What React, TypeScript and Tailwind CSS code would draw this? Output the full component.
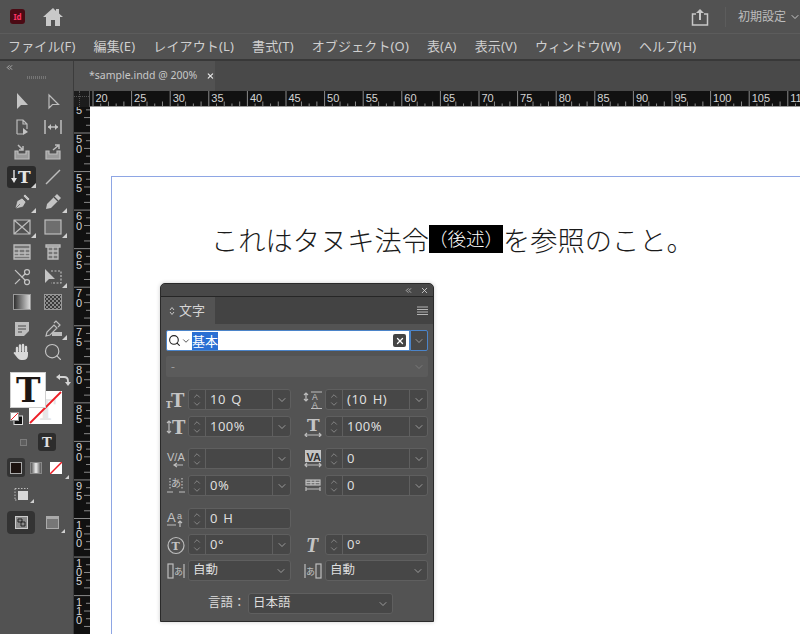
import React from 'react';
import { ChevronDown, ChevronUp, ChevronsLeft, X, Search, Scissors } from 'lucide-react';

const ui = "font-['Noto_Sans','Noto_Sans_CJK_JP',sans-serif]";
const menus = ['ファイル(F)', '編集(E)', 'レイアウト(L)', '書式(T)', 'オブジェクト(O)', '表(A)', '表示(V)', 'ウィンドウ(W)', 'ヘルプ(H)'];

const Corner = () => (
  <span className="absolute bottom-0 right-[1px] w-0 h-0 border-l-[5px] border-l-transparent border-b-[5px] border-b-[#d0d0d0]" />
);

const Ico = ({ children, size = 20 }: { children: React.ReactNode; size?: number }) => (
  <svg width={size} height={size} viewBox="0 0 20 20" fill="none" stroke="#bdbdbd" strokeWidth="1.2">
    {children}
  </svg>
);

const SerifT = ({ x, y, size, fill = '#c4c4c4' }: { x: number; y: number; size: number; fill?: string }) => (
  <text x={x} y={y} fontSize={size} fontWeight="700" fontFamily="'DejaVu Serif', serif" fill={fill} stroke="none">T</text>
);

const tools: { icon: React.ReactNode; corner?: boolean; active?: boolean }[][] = [
  [
    { icon: <Ico><path d="M5 2v16l4-4h7z" transform="translate(0 -1)" fill="#c4c4c4" stroke="none" /></Ico> },
    { icon: <Ico><path d="M6 3v13l3.500-3.500h6z" /></Ico> },
  ],
  [
    { icon: <Ico><path d="M5 17V3h6l4 4v5M11 3v4h4M5 17h6" /><path d="M11 11v7l5-3z" fill="#c4c4c4" stroke="none" /></Ico> },
    { icon: <Ico><path d="M2 3v14M18 3v14M5 10h10" strokeWidth="1.5" /><path d="M8 7l-3 3 3 3zM12 7l3 3-3 3z" fill="#c4c4c4" stroke="none" /></Ico> },
  ],
  [
    { icon: <Ico><path d="M3 9v8h14V9h-3v3H6V9z" fill="#9a9a9a" /><path d="M6 3l5 5M11 4v4H7" strokeWidth="1.5" /></Ico> },
    { icon: <Ico><path d="M3 9v8h14V9h-3v3H6V9z" fill="#9a9a9a" /><path d="M10 8l6-5M12 3h4v4" strokeWidth="1.5" /></Ico> },
  ],
  [
    {
      active: true,
      corner: true,
      icon: (
        <svg width="24" height="20" viewBox="0 0 24 20" fill="none" stroke="#e4e4e4" strokeWidth="1.400">
          <path d="M4 3v10" />
          <path d="M1 11l3 5 3-5z" fill="#e4e4e4" stroke="none" />
          <SerifT x={8} y={16} size={17} fill="#e4e4e4" />
        </svg>
      ),
    },
    { icon: <Ico><path d="M3 17L17 3" strokeWidth="1.400" /></Ico> },
  ],
  [
    { corner: true, icon: <Ico><path d="M3 17l2-8 5-3 4 4-3 5zM3 17l5-5M11 4l2-2 5 5-2 2z" fill="#c4c4c4" stroke="#3f3f3f" strokeWidth=".6" /></Ico> },
    { corner: true, icon: <Ico><path d="M3 17l1-5L14 2l4 4L8 16z" fill="#c4c4c4" stroke="none" /><path d="M11 5l4 4" stroke="#4a4a4a" /></Ico> },
  ],
  [
    { corner: true, icon: <Ico><path d="M2 3h16v14H2zM2 3l16 14M18 3L2 17" /></Ico> },
    { corner: true, icon: <Ico><rect x="2" y="3" width="16" height="14" fill="#6e6e6e" stroke="#bdbdbd" /></Ico> },
  ],
  [
    { icon: <Ico><path d="M2 3h16v14H2zM2 7h16M2 11h16M2 14h16M7 7v7M13 7v7" fill="#777" strokeWidth="1.300" /></Ico> },
    { icon: <Ico><path d="M3 3h14v2H3zM5 5v12h10V5zM10 5v12M5 9h10M5 13h10" fill="#777" strokeWidth="1.300" /></Ico> },
  ],
  [
    { icon: <Scissors size={20} color="#c4c4c4" strokeWidth={1.500} className="-scale-x-100" /> },
    { corner: true, icon: <Ico><path d="M8 4h10v12H8" strokeDasharray="2 1.500" /><path d="M2 2v14l4-4h6z" fill="#c4c4c4" stroke="none" /></Ico> },
  ],
  [
    {
      icon: (
        <svg width="18" height="16" viewBox="0 0 18 16">
          <defs>
            <linearGradient id="tg"><stop offset="0" stopColor="#2b2b2b" /><stop offset="1" stopColor="#e0e0e0" /></linearGradient>
          </defs>
          <rect x=".5" y=".5" width="17" height="15" fill="url(#tg)" stroke="#9a9a9a" />
        </svg>
      ),
    },
    {
      icon: (
        <svg width="18" height="16" viewBox="0 0 18 16">
          <defs>
            <pattern id="ck" width="4" height="4" patternUnits="userSpaceOnUse">
              <rect width="4" height="4" fill="#8a8a8a" /><rect width="2" height="2" fill="#3a3a3a" /><rect x="2" y="2" width="2" height="2" fill="#3a3a3a" />
            </pattern>
          </defs>
          <rect x=".5" y=".5" width="17" height="15" fill="url(#ck)" stroke="#9a9a9a" />
        </svg>
      ),
    },
  ],
];

const tools2: { icon: React.ReactNode; corner?: boolean }[][] = [
  [
    { icon: <Ico><path d="M3 3h14v9l-5 5H3z" fill="#bdbdbd" stroke="none" /><path d="M6 7h8M6 10h8M6 13h4" stroke="#4a4a4a" /></Ico> },
    { corner: true, icon: <Ico><path d="M3 17l1-4 7-7 3 3-7 7zM11 4l2-2 4 4-2 2" /><rect x="9" y="13" width="10" height="4" fill="#bdbdbd" stroke="none" /></Ico> },
  ],
  [
    {
      icon: (
        <Ico>
          <path d="M5 11V6M8 9V3.500M11 9V3M14 10V5" stroke="#d8d8d8" strokeWidth="2.400" strokeLinecap="round" />
          <path d="M4 10h12v3q0 5-5 5H9q-2 0-3.500-2L1.500 11q1-1.500 2.500-.500z" fill="#d8d8d8" stroke="none" />
        </Ico>
      ),
    },
    { icon: <Search size={20} color="#c4c4c4" strokeWidth={1.400} /> },
  ],
];

const ToolRow = ({ row, h = 'h-[25px]' }: { row: { icon: React.ReactNode; corner?: boolean; active?: boolean }[]; h?: string }) => (
  <div className={`flex ${h} items-center`}>
    {row.map((t, i) => (
      <div key={i} className="relative flex h-[22px] w-[31px] items-center justify-center">
        {t.active && <span className="absolute inset-y-0 left-[1px] right-[1px] rounded-[3px] bg-[#2b2b2b]" />}
        <span className="relative flex">{t.icon}</span>
        {t.corner && <Corner />}
      </div>
    ))}
  </div>
);

const Toolbar = () => (
  <aside className="flex w-[74px] shrink-0 flex-col border-r border-[#3c3c3c] bg-[#525252]">
    <div className="flex h-[12px] items-center pl-[5px]">
      <ChevronsLeft size={9} color="#cfcfcf" strokeWidth={2} />
    </div>
    <div className="mx-auto mt-[3px] h-[3px] w-[20px] bg-[repeating-linear-gradient(90deg,#767676_0,#767676_1px,transparent_1px,transparent_2px)]" />
    <div className="mt-[10px] flex flex-col pl-[6px]">
      {tools.map((r, i) => <ToolRow key={i} row={r} />)}
      <div className="mt-[3px]">
        {tools2.map((r, i) => <ToolRow key={i} row={r} h={i === 0 ? 'h-[24px]' : 'h-[22px]'} />)}
      </div>
    </div>
    <div className="relative ml-[10px] mt-[9px] h-[53px] w-[56px]">
      <div className="absolute left-[19px] top-[19px] h-[33px] w-[33px] overflow-hidden bg-white">
        <svg width="33" height="33" viewBox="0 0 33 33">
          <SerifT x={6} y={29} size={28} fill="#e6e6e6" />
          <path d="M1 32L32 1" stroke="#ee1c25" strokeWidth="1.800" />
        </svg>
      </div>
      <div className="absolute left-0 top-0 flex h-[36px] w-[36px] items-center justify-center border border-[#cfcfcf] bg-white">
        <svg width="34" height="34" viewBox="0 0 34 34"><SerifT x={5} y={29} size={33} fill="#1d1614" /></svg>
      </div>
      <svg className="absolute left-[45px] top-[0px]" width="16" height="16" viewBox="0 0 16 16" fill="none" stroke="#d4d4d4" strokeWidth="1.800">
        <path d="M3 5h6q4 0 4 4v3" />
        <path d="M1 5l4-3v6zM10 10h6l-3 4z" fill="#d4d4d4" stroke="none" />
      </svg>
      <svg className="absolute left-[0px] top-[40px]" width="13" height="13" viewBox="0 0 13 13">
        <rect x="4" y="4" width="8.500" height="8.500" fill="#111" stroke="#ddd" />
        <rect x=".5" y=".5" width="8" height="8" fill="#fff" stroke="#999" />
        <path d="M1 8l7-7" stroke="#ee1c25" />
      </svg>
    </div>
    <div className="ml-[14px] mt-[8px] flex h-[18px] items-center gap-[11px]">
      <span className="ml-[6px] h-[7px] w-[7px] border border-[#7c7c7c] bg-[#5e5e5e]" />
      <span className="flex h-[18px] w-[18px] items-center justify-center rounded-[3px] bg-[#2d2d2d]">
        <svg width="14" height="14" viewBox="0 0 14 14"><SerifT x={2} y={12} size={13} fill="#e0e0e0" /></svg>
      </span>
    </div>
    <div className="ml-[7px] mt-[7px] flex h-[19px] items-center">
      <span className="flex h-[19px] w-[18px] items-center justify-center rounded-[3px] bg-[#333]">
        <span className="h-[12px] w-[12px] border border-[#aaa] bg-[#1c1310]" />
      </span>
      <span className="ml-[5px] h-[12px] w-[12px] border border-[#888] bg-[linear-gradient(90deg,#555,#eee_50%,#555)]" />
      <span className="relative ml-[8px] h-[12px] w-[12px] bg-white">
        <svg width="12" height="12" viewBox="0 0 12 12" className="absolute inset-0"><path d="M0 12L12 0" stroke="#ee1c25" strokeWidth="1.500" /></svg>
        <span className="absolute -bottom-[5px] -right-[7px] h-0 w-0 border-b-[4px] border-l-[4px] border-b-[#cfcfcf] border-l-transparent" />
      </span>
    </div>
    <div className="relative ml-[14px] mt-[10px] h-[18px] w-[18px]">
      <svg width="16" height="16" viewBox="0 0 16 16">
        <rect x="4" y="4" width="10" height="9" fill="#d8d8d8" />
        <path d="M1 1.500h13M1 1.500v11M1 13h2" fill="none" stroke="#bdbdbd" strokeDasharray="1.500 1.500" />
      </svg>
      <span className="absolute bottom-[2px] -right-[2px] h-0 w-0 border-b-[4px] border-l-[4px] border-b-[#cfcfcf] border-l-transparent" />
    </div>
    <div className="ml-[7px] mt-[6px] flex h-[23px] items-center">
      <span className="flex h-[23px] w-[28px] items-center justify-center rounded-[4px] bg-[#333]">
        <svg width="13" height="13" viewBox="0 0 13 13">
          <rect x=".5" y=".5" width="12" height="12" fill="#8a8a8a" stroke="#ccc" />
          <path d="M3 3h4v3H3zM6 6h4v4H6z" fill="none" stroke="#222" />
        </svg>
      </span>
      <span className="relative ml-[11px] h-[13px] w-[13px] border border-[#aaa] bg-[#777]">
        <span className="absolute inset-x-0 top-0 h-[2px] bg-[#aaa]" />
        <span className="absolute -bottom-[5px] -right-[7px] h-0 w-0 border-b-[4px] border-l-[4px] border-b-[#cfcfcf] border-l-transparent" />
      </span>
    </div>
  </aside>
);

const hMajors = Array.from({ length: 19 }, (_, i) => ({ x: 3 + i * 38.6, label: 20 + i * 5 }));
const vMajors = Array.from({ length: 13 }, (_, i) => ({ y: 26 + i * 38.55, label: 50 + i * 5 }));

const HRuler = () => (
  <div className="flex h-[16px] shrink-0 bg-[#111]">
    <div className="relative h-full w-[16px] shrink-0 border-r border-[#555] bg-[#1c1c1c]">
      <span className="absolute left-0 right-0 top-[5px] border-t border-dotted border-[#555]" />
      <span className="absolute bottom-0 top-0 left-[5px] border-l border-dotted border-[#555]" />
    </div>
    <svg className="flex-1" height="16" viewBox="0 0 710 16">
      {hMajors.map((m) => (
        <g key={m.label}>
          <path d={`M${m.x} 0V16`} stroke="#8a8a8a" />
          {[1, 2, 3, 4].map((k) => (
            <path key={k} d={`M${m.x + k * 7.720} ${k % 2 ? 12.500 : 10.500}V16`} stroke="#8a8a8a" />
          ))}
          <text x={m.x + 2.500} y={10.500} fontSize="11" fill="#d4d4d4" fontFamily="'Liberation Sans', sans-serif">{m.label}</text>
        </g>
      ))}
      <path d="M0 15.500H710" stroke="#9a9a9a" />
    </svg>
  </div>
);

const VRuler = () => (
  <svg width="16" height="527" viewBox="0 0 16 527" className="shrink-0 bg-[#111]">
    <text x={2} y={7} fontSize="11" fill="#d4d4d4" fontFamily="'Liberation Sans', sans-serif">5</text>
    {[1, 2, 3, 4].map((k) => (
      <path key={k} d={`M${k % 2 ? 12 : 10} ${26 - k * 7.710}H16`} stroke="#8a8a8a" />
    ))}
    {vMajors.map((m) => (
      <g key={m.label}>
        <path d={`M0 ${m.y}H16`} stroke="#8a8a8a" />
        {[1, 2, 3, 4].map((k) => (
          <path key={k} d={`M${k % 2 ? 12 : 10} ${m.y + k * 7.710}H16`} stroke="#8a8a8a" />
        ))}
        {String(m.label).split('').map((d, i) => (
          <text key={i} x={2} y={m.y + 10 + i * (m.label >= 100 ? 9 : 10)} fontSize="11" fill="#d4d4d4" fontFamily="'Liberation Sans', sans-serif">{d}</text>
        ))}
      </g>
    ))}
  </svg>
);

const Chev = ({ color = '#c8c8c8' }: { color?: string }) => <ChevronDown size={12} color={color} strokeWidth={1.300} />;

const Field = ({ value, chevron = true }: { value?: string; chevron?: boolean }) => (
  <div className="flex h-[21px] w-[103px] items-stretch rounded-[3px] border border-[#5f5f5f] bg-[#474747] text-[13px] leading-[19px] tracking-[0.5px] text-[#dedede] [word-spacing:1.500px]">
    <div className="flex w-[17px] shrink-0 flex-col items-center justify-center border-r border-[#5f5f5f]">
      <ChevronUp size={10} color="#c0c0c0" strokeWidth={1.200} className="-mb-[1px]" />
      <ChevronDown size={10} color="#c0c0c0" strokeWidth={1.200} className="-mt-[1px]" />
    </div>
    <div className="flex-1 pl-[4px]">{value}</div>
    {chevron && (
      <div className="flex w-[18px] shrink-0 items-center justify-center border-l border-[#5f5f5f]">
        <Chev />
      </div>
    )}
  </div>
);

const Pick = ({ value, w = 'w-[103px]' }: { value: string; w?: string }) => (
  <div className={`flex h-[21px] ${w} items-center justify-between rounded-[3px] border border-[#5f5f5f] bg-[#474747] pl-[4px] pr-[3px] text-[12.500px] text-[#dedede]`}>
    <span>{value}</span>
    <Chev />
  </div>
);

const Cell = ({ icon, children }: { icon?: React.ReactNode; children?: React.ReactNode }) => (
  <div className="flex w-[125px] items-center justify-between">
    <span className="flex w-[20px] justify-center">{icon}</span>
    {children}
  </div>
);

const Row = ({ className = '', children }: { className?: string; children: React.ReactNode }) => (
  <div className={`flex justify-between ${className}`}>{children}</div>
);

const Panel = () => (
  <section className={`absolute left-[70px] top-[176px] w-[274px] rounded-t-[5px] border border-[#2a2a2a] bg-[#535353] shadow-[0_0_4px_rgba(0,0,0,0.2)] ${ui}`}>
    <div className="flex h-[13px] items-center justify-end gap-[7px] rounded-t-[5px] border-b border-[#262626] bg-[#484848] pr-[4px]">
      <ChevronsLeft size={9} color="#cfcfcf" strokeWidth={2} />
      <X size={9} color="#d8d8d8" strokeWidth={2.200} />
    </div>
    <div className="flex h-[27px] items-stretch justify-between bg-[#434343]">
      <div className="flex w-[54px] items-center gap-[4px] bg-[#535353] pl-[8px] text-[13px] text-[#d4d4d4]">
        <svg width="6" height="10" viewBox="0 0 6 10" fill="none" stroke="#c8c8c8">
          <path d="M1 4l2-2.500L5 4M1 6l2 2.500L5 6" />
        </svg>
        文字
      </div>
      <div className="flex items-center pr-[5px]">
        <svg width="11" height="9" viewBox="0 0 11 9" stroke="#b4b4b4"><path d="M0 1h11M0 3.500h11M0 6h11M0 8.500h11" /></svg>
      </div>
    </div>
    <div className="flex flex-col px-[5px] pb-[7px] pt-[6px]">
      <div className="flex h-[21px]">
        <div className="flex flex-1 items-center rounded-l-[2px] border border-[#4b84c9] bg-white pl-[1px] pr-[3px]">
          <Search size={13} color="#222" strokeWidth={2} />
          <ChevronDown size={10} color="#222" strokeWidth={1.800} />
          <span className="ml-[1px] bg-[#2a6fd3] text-[13px] leading-[18px] text-white">基本</span>
          <span className="ml-auto flex h-[13px] w-[13px] items-center justify-center rounded-[2px] bg-[#444]">
            <X size={10} color="#fff" strokeWidth={3} />
          </span>
        </div>
        <div className="flex w-[18px] items-center justify-center rounded-r-[2px] border border-[#4b84c9] bg-[#474747]"><Chev /></div>
      </div>
      <div className="mt-[5px] flex h-[21px] items-center justify-between rounded-[2px] bg-[#5b5b5b] pl-[5px] pr-[3px] text-[12px] text-[#9a9a9a]">
        <span>-</span>
        <Chev color="#8a8a8a" />
      </div>

      <Row className="mt-[12px]">
        <Cell icon={<svg width="20" height="20" viewBox="0 0 20 20"><SerifT x={-1} y={18} size={10} /><SerifT x={5} y={17} size={18} /></svg>}><Field value="10 Q" /></Cell>
        <Cell icon={<Ico><path d="M3 3v8M1 5l2-2 2 2M1 9l2 2 2-2M8 2h11M8 18.500h11" /><text x="9" y="10" fontSize="8.500" fill="#c4c4c4" stroke="none" fontFamily="'Liberation Sans', sans-serif">A</text><text x="9" y="17.500" fontSize="8.500" fill="#c4c4c4" stroke="none" fontFamily="'Liberation Sans', sans-serif">A</text></Ico>}><Field value="(10 H)" /></Cell>
      </Row>
      <Row className="mt-[6px]">
        <Cell icon={<Ico><path d="M3 4v12M1 6l2-2 2 2M1 14l2 2 2-2" /><SerifT x={6} y={17} size={18} /></Ico>}><Field value="100%" /></Cell>
        <Cell icon={<Ico><SerifT x={4} y={14} size={17} /><path d="M2 18h16M4 16l-2 2 2 2M16 16l2 2-2 2" /></Ico>}><Field value="100%" /></Cell>
      </Row>

      <Row className="mt-[11px]">
        <Cell icon={<Ico><text x="1" y="12" fontSize="11" fill="#c4c4c4" stroke="none" fontFamily="'Liberation Sans', sans-serif">V/A</text><path d="M17 16H8M11 14l-3 2 3 2" /></Ico>}><Field /></Cell>
        <Cell icon={<Ico><rect x="2" y="1" width="16" height="12" fill="#c4c4c4" stroke="none" /><text x="3.500" y="11.500" fontSize="11" fontWeight="700" fill="#333" stroke="none" fontFamily="'Liberation Sans', sans-serif">VA</text><path d="M2 16h16M4 14l-2 2 2 2M16 14l2 2-2 2" /></Ico>}><Field value="0" /></Cell>
      </Row>
      <Row className="mt-[6px]">
        <Cell icon={<Ico><text x="5" y="11" fontSize="10" fill="#c4c4c4" stroke="none" fontFamily="'Noto Sans CJK JP', sans-serif">あ</text><path d="M4 2v11M16 2v11" strokeDasharray="1.500 1.500" /><path d="M1 16h6M13 16h6" /></Ico>}><Field value="0%" /></Cell>
        <Cell icon={<Ico><rect x="3" y="4" width="14" height="5" fill="#777" /><path d="M3 6.500h14M8 4v5M12 4v5M3 13h14M3 15v-4M17 15v-4" /></Ico>}><Field value="0" /></Cell>
      </Row>

      <Row className="mt-[12px]">
        <Cell icon={<Ico><text x="1" y="13" fontSize="13" fill="#c4c4c4" stroke="none" fontFamily="'Liberation Sans', sans-serif">A</text><text x="11" y="10" fontSize="9" fill="#c4c4c4" stroke="none" fontFamily="'Liberation Sans', sans-serif">a</text><path d="M1 16h9M14 18v-6M12 14l2-2 2 2" /></Ico>}><Field value="0 H" chevron={false} /></Cell>
      </Row>
      <Row className="mt-[5px]">
        <Cell icon={<Ico><circle cx="10" cy="10.500" r="8" /><SerifT x={5.500} y={15} size={11} /></Ico>}><Field value="0°" /></Cell>
        <Cell icon={<Ico><text x="3" y="17" fontSize="20" fontWeight="700" fontStyle="italic" fill="#c4c4c4" stroke="none" fontFamily="'Liberation Serif', serif">T</text></Ico>}><Field value="0°" chevron={false} /></Cell>
      </Row>
      <Row className="mt-[5px]">
        <Cell icon={<Ico><rect x="2" y="3" width="5" height="14" /><path d="M18 3v14" /><text x="8" y="13.500" fontSize="9" fill="#c4c4c4" stroke="none" fontFamily="'Noto Sans CJK JP', sans-serif">あ</text></Ico>}><Pick value="自動" /></Cell>
        <Cell icon={<Ico><rect x="13" y="3" width="5" height="14" /><path d="M2 3v14" /><text x="3" y="13.500" fontSize="9" fill="#c4c4c4" stroke="none" fontFamily="'Noto Sans CJK JP', sans-serif">あ</text></Ico>}><Pick value="自動" /></Cell>
      </Row>
      <div className="mt-[12px] flex items-center pl-[42px] text-[12.500px] text-[#dedede]">
        <span className="w-[40px]">言語：</span>
        <Pick value="日本語" w="w-[145px]" />
      </div>
    </div>
  </section>
);

export default function App() {
  return (
    <div className={`flex h-[634px] w-[800px] flex-col overflow-hidden bg-[#525252] ${ui}`}>
      <header className="flex h-[34px] shrink-0 items-center border-b border-[#5c5c5c] pl-[10px]">
        <div className="flex h-[15px] w-[15px] items-center justify-center rounded-[3px] bg-[#4b0a14] text-[8px] font-bold leading-none text-[#ff3366]">Id</div>
        <svg className="ml-[18px]" width="20" height="18" viewBox="0 0 20 18" fill="#c8c8c8">
          <path d="M10 0L0 9h3v9h5v-6h4v6h5V9h3l-4-3.500V1h-3v2z" />
        </svg>
        <div className="ml-auto flex items-center">
          <svg width="18" height="18" viewBox="0 0 18 18" fill="none" stroke="#c8c8c8" strokeWidth="1.500">
            <path d="M5 6H1.500v11h15V6H13" />
            <path d="M9 12V2" strokeWidth="2" />
            <path d="M5 5l4-4 4 4z" fill="#c8c8c8" stroke="none" />
          </svg>
          <span className="ml-[16px] h-[20px] border-l border-[#5c5c5c]" />
          <span className="ml-[12px] text-[12px] text-[#bdbdbd]">初期設定</span>
          <ChevronDown size={12} color="#c8c8c8" className="ml-[3px] mr-[-1px]" />
        </div>
      </header>
      <nav className="flex h-[27px] shrink-0 items-center gap-[18px] border-b-2 border-[#383838] pl-[8px] text-[13px] tracking-[0.14px] text-[#cfcfcf]">
        {menus.map((m) => <span key={m}>{m}</span>)}
      </nav>
      <div className="flex min-h-0 flex-1">
        <Toolbar />
        <main className="flex min-w-0 flex-1 flex-col">
          <div className="flex h-[30px] shrink-0 bg-[#494949]">
            <div className="flex w-[141px] items-center whitespace-nowrap bg-[#525252] pl-[15px] text-[10.500px] text-[#c8c8c8]">
              <span>*sample.indd @ 200%</span>
              <X size={10} color="#e8e8e8" strokeWidth={3} className="ml-[9px]" />
            </div>
          </div>
          <HRuler />
          <div className="flex min-h-0 flex-1">
            <VRuler />
            <div className="relative flex-1 bg-white">
              <div className="absolute left-[21px] top-[69px] h-[500px] w-[700px] border-l border-t border-[#8ea6e4]" />
              <div className="absolute left-[121px] top-[112px] flex h-[40px] items-center whitespace-nowrap font-['Noto_Sans_CJK_JP',sans-serif] text-[27.250px] font-light text-[#1a1a1a]">
                <span>これはタヌキ法令</span>
                <span className="flex h-[28px] items-center bg-black text-[18.500px] text-white">（後述）</span>
                <span>を参照のこと。</span>
              </div>
              <Panel />
            </div>
          </div>
        </main>
      </div>
    </div>
  );
}
